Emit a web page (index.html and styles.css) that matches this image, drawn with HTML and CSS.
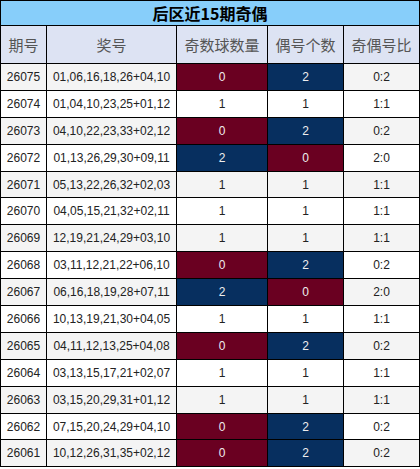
FILE: index.html
```html
<!DOCTYPE html>
<html lang="zh">
<head>
<meta charset="utf-8">
<link rel="stylesheet" href="styles.css">
</head>
<body>
<table class="tbl">
  <colgroup>
    <col class="c1"><col class="c2"><col class="c3"><col class="c4"><col class="c5">
  </colgroup>
  <thead>
    <tr class="title"><th colspan="5">后区近15期奇偶</th></tr>
    <tr class="head"><th>期号</th><th>奖号</th><th>奇数球数量</th><th>偶号个数</th><th>奇偶号比</th></tr>
  </thead>
  <tbody>
    <tr class="odd"><td>26075</td><td>01,06,16,18,26+04,10</td><td class="red">0</td><td class="blue">2</td><td>0:2</td></tr>
    <tr><td>26074</td><td>01,04,10,23,25+01,12</td><td>1</td><td>1</td><td>1:1</td></tr>
    <tr class="odd"><td>26073</td><td>04,10,22,23,33+02,12</td><td class="red">0</td><td class="blue">2</td><td>0:2</td></tr>
    <tr><td>26072</td><td>01,13,26,29,30+09,11</td><td class="blue">2</td><td class="red">0</td><td>2:0</td></tr>
    <tr class="odd"><td>26071</td><td>05,13,22,26,32+02,03</td><td>1</td><td>1</td><td>1:1</td></tr>
    <tr><td>26070</td><td>04,05,15,21,32+02,11</td><td>1</td><td>1</td><td>1:1</td></tr>
    <tr class="odd"><td>26069</td><td>12,19,21,24,29+03,10</td><td>1</td><td>1</td><td>1:1</td></tr>
    <tr><td>26068</td><td>03,11,12,21,22+06,10</td><td class="red">0</td><td class="blue">2</td><td>0:2</td></tr>
    <tr class="odd"><td>26067</td><td>06,16,18,19,28+07,11</td><td class="blue">2</td><td class="red">0</td><td>2:0</td></tr>
    <tr><td>26066</td><td>10,13,19,21,30+04,05</td><td>1</td><td>1</td><td>1:1</td></tr>
    <tr class="odd"><td>26065</td><td>04,11,12,13,25+04,08</td><td class="red">0</td><td class="blue">2</td><td>0:2</td></tr>
    <tr><td>26064</td><td>03,13,15,17,21+02,07</td><td>1</td><td>1</td><td>1:1</td></tr>
    <tr class="odd"><td>26063</td><td>03,15,20,29,31+01,12</td><td>1</td><td>1</td><td>1:1</td></tr>
    <tr><td>26062</td><td>07,15,20,24,29+04,10</td><td class="red">0</td><td class="blue">2</td><td>0:2</td></tr>
    <tr class="odd"><td>26061</td><td>10,12,26,31,35+02,12</td><td class="red">0</td><td class="blue">2</td><td>0:2</td></tr>
  </tbody>
</table>
</body>
</html>
```
FILE: styles.css
```css
html, body {
  margin: 0;
  padding: 0;
  background: #fff;
}
.tbl {
  border-collapse: collapse;
  table-layout: fixed;
  width: 419px;
  font-family: "Liberation Sans", "Noto Sans CJK SC", sans-serif;
  font-size: 12px;
  color: #222;
}
.c1 { width: 46px; }
.c2 { width: 130px; }
.c3 { width: 91px; }
.c4 { width: 76px; }
.c5 { width: 76px; }
.tbl th, .tbl td {
  border: 1px solid #000;
  padding: 0;
  text-align: center;
  vertical-align: middle;
}
.title th {
  height: 24px;
  background: #87cefa;
  font-family: "Noto Sans CJK SC", sans-serif;
  font-size: 16px;
  font-weight: bold;
  color: #000;
  line-height: 20px;
}
.head th {
  height: 37px;
  background: #dde3f3;
  font-family: "Noto Sans CJK SC", sans-serif;
  font-size: 15px;
  font-weight: normal;
  color: #555;
}
.tbl td {
  height: 25.9px;
  background: #fff;
}
.tbl tr.odd td {
  background: #f4f4f4;
}
.tbl tr td.red {
  background: #6a0021;
  color: #eee;
}
.tbl tr td.blue {
  background: #072f5f;
  color: #eee;
}
```
